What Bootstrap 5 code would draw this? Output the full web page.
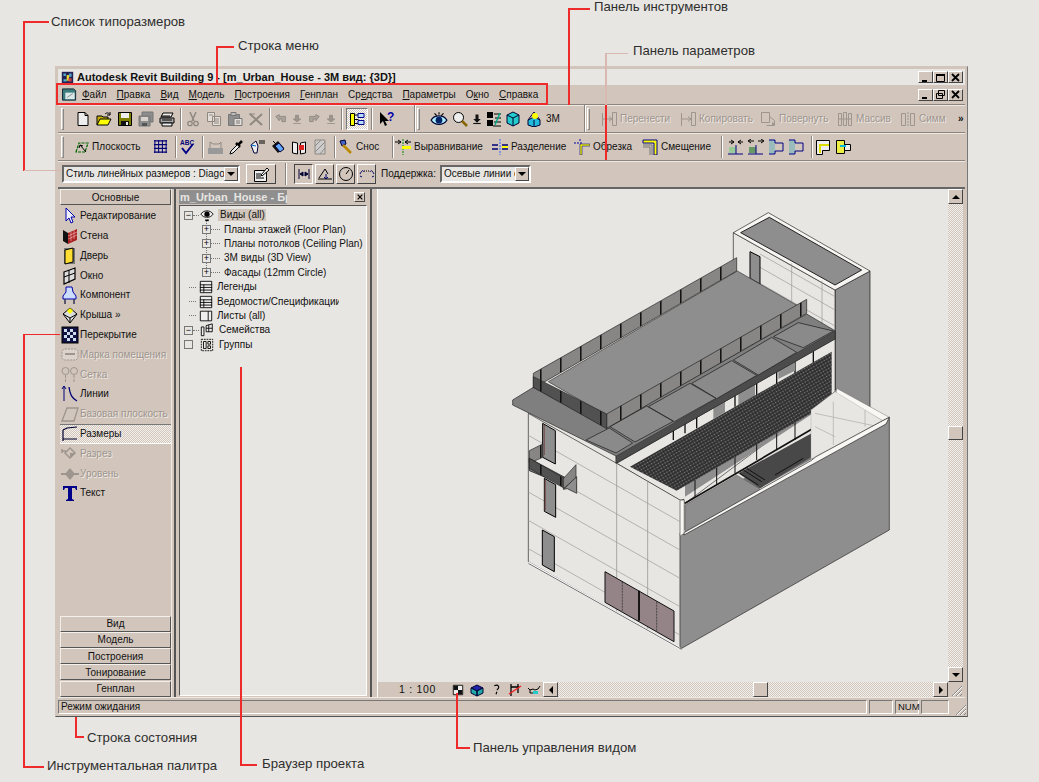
<!DOCTYPE html>
<html lang="ru">
<head>
<meta charset="utf-8">
<title>Autodesk Revit Building</title>
<link href="https://cdn.jsdelivr.net/npm/bootstrap@5.3.0/dist/css/bootstrap.min.css" rel="stylesheet">
<style>
:root{--rv-bg:#d2c6bc;--rv-page:#e8e6e2;--rv-dark:#777;--rv-red:#ee2a2a;}
html,body{height:782px;overflow:hidden;}
body{background:var(--rv-page);font-family:"Liberation Sans",Arial,sans-serif;font-size:10px;line-height:1;color:#111;position:relative;}
svg{display:block;flex:none;}
.rv-win{position:absolute;left:55px;top:66px;width:913px;height:651px;background:var(--rv-bg);border:1px solid;border-color:var(--rv-bg) #777 #555 var(--rv-bg);box-shadow:inset 1px 1px 0 var(--rv-bg);padding:2px;}
.rv-titlebar{height:16px;background:var(--rv-page);padding:0 2px 0 3px;}
.rv-title{font-weight:700;font-size:11px;margin-left:3px;white-space:nowrap;color:#111;}
.rv-capbtn{width:15px;height:12px;background:var(--rv-bg);border:1px solid;border-color:#fff #444 #444 #fff;display:flex;align-items:center;justify-content:center;}
.rv-menubar{height:19px;padding-right:2px;}
.rv-menubar .nav-link{padding:0;margin-right:10px;color:#111;font-size:10px;white-space:nowrap;}
.rv-row{border-top:1px solid #8c847c;box-shadow:inset 0 1px 0 #efe9e4;}
.rv-row1{height:28px;}
.rv-row2{height:28px;}
.rv-row3{height:27px;padding-left:4px;}
.rv-handle{width:3px;height:22px;border:1px solid;border-color:#fff #888 #888 #fff;margin:0 8px 0 3px;flex:none;}
.rv-handle2{margin-left:2px;}
.rv-handle3{margin-right:10px;}
.rv-cell{width:21px;height:22px;display:flex;align-items:center;justify-content:center;flex:none;}
.rv-sep{width:2px;height:22px;border-left:1px solid #8c847c;border-right:1px solid #fff;flex:none;}
.rv-lab{display:flex;align-items:center;height:22px;flex:none;overflow:hidden;white-space:nowrap;}
.rv-lab svg{margin-left:1px;margin-right:3px;}
.rv-off{color:#9d958e;text-shadow:1px 1px 0 #efe9e4;}
.rv-pressed{background:repeating-conic-gradient(#fff 0 25%,var(--rv-bg) 0 50%) 0 0/2px 2px;border:1px solid;border-color:#777 #fff #fff #777;}
.rv-combo{height:18px;background:var(--rv-page);border:2px solid;border-color:#666 #fff #fff #666;display:flex;align-items:center;padding-left:2px;overflow:hidden;white-space:nowrap;}
.rv-combotext{flex:1;overflow:hidden;font-size:10px;}
.rv-c1{width:178px}.rv-c2{width:91px}.rv-supp{margin-left:3px;margin-right:4px;white-space:nowrap;font-size:10px}
.rv-arrow{width:14px;height:14px;background:var(--rv-bg);border:1px solid;border-color:#fff #444 #444 #fff;display:flex;align-items:center;justify-content:center;flex:none;}
.rv-tog{width:19px;height:20px;background:var(--rv-bg);border:1px solid;border-color:#fff #444 #444 #fff;display:flex;align-items:center;justify-content:center;margin-right:2px;flex:none;}
.rv-tog.rv-pressed{border-color:#444 #fff #fff #444;}
.rv-big{width:30px;height:20px;margin-left:6px;margin-right:0;}
.w14{width:14px}.w12{width:12px}.w16{width:16px}.w19{width:19px}.w20{width:20px}.w22{width:22px}.w24{width:24px}
.w357{width:357px}.w170{width:170px}.l51{width:51px}.l56{width:56px}.l63{width:63px}.l68{width:68px}.l77{width:77px}.l78{width:78px}.l79{width:79px}.l80{width:80px}.l82{width:82px}.l97{width:97px}
.ml7{margin-left:7px}.ml9{margin-left:9px}.ml5{margin-left:5px}.ml4{margin-left:4px}.ml3{margin-left:3px}
.rv-divr{border-right:1px solid #8c847c;box-shadow:1px 0 0 #fff;height:27px;}
.rv-main{height:510px;border-top:2px solid #666;}
.rv-palette{width:111px;margin-left:2px;flex:none;}
.btn.rv-tab{display:block;width:111px;height:16px;padding:0;margin:0 0 .3px;font-size:10px;line-height:13px;color:#111;background:var(--rv-bg);border:1px solid;border-color:#f3efea #555 #555 #f3efea;border-radius:0;}
.rv-pal-list{padding-top:1px;}
.rv-pal-item{height:19.8px;display:flex;align-items:center;padding-left:1px;white-space:nowrap;}
.rv-pal-item svg{margin-right:1px;}
.rv-active{background:repeating-conic-gradient(#f4f0ec 0 25%,var(--rv-bg) 0 50%) 0 0/2px 2px;border-top:1px solid #777;border-bottom:1px solid #fff;}
.rv-split{width:5px;border-left:1px solid #efe9e4;border-right:2px solid #555;flex:none;}
.rv-browser{width:194px;flex:none;padding:1px 3px 1px 3px;}
.rv-bhead{height:14px;margin-bottom:1px;}
.rv-btitle{width:108px;background:#8f8f8f;color:#e8e6e2;font-weight:700;font-size:11px;height:14px;line-height:14px;overflow:hidden;white-space:nowrap;padding-left:1px;}
.rv-bclose{width:11px;height:10px;background:var(--rv-bg);border:1px solid;border-color:#fff #444 #444 #fff;margin-right:2px;font-size:8px;display:flex;align-items:center;justify-content:center;}
.rv-tree{flex:1;background:var(--rv-page);border:1px solid;border-color:#555 #fff #fff #555;padding:2px 0 0 4px;}
.rv-node{height:14.4px;display:flex;align-items:center;white-space:nowrap;position:relative;}
.rv-box{width:9px;height:9px;border:1px solid #777;background:var(--rv-page);display:flex;align-items:center;justify-content:center;font-size:9px;line-height:9px;color:#000;flex:none;position:relative;z-index:1;}
.rv-dots{border-top:1px dotted #777;width:6px;flex:none;}
.rv-ind{padding-left:18px;}
.rv-ind::before{content:"";position:absolute;left:22px;top:-5px;height:15px;border-left:1px dotted #777;}
.rv-ind .rv-dots{width:9px;}
.rv-nl{padding-left:5px;}
.rv-nl .rv-dots{width:7px;margin-right:3px;}
.rv-tname{margin-left:4px;}
.rv-sel{background:var(--rv-bg);padding:1px 1px;margin-left:3px;padding-left:2px;}
.rv-clip{width:122px;overflow:hidden;display:block;}
.rv-splitr{width:8px;flex:none;border-left:2px solid #555;border-right:1px solid #fff;}
.rv-draw{width:585px;flex:none;}
.rv-body{min-height:0}
.rv-canvas{flex:1;background:var(--rv-page);position:relative;overflow:hidden;}
.rv-check{background:repeating-conic-gradient(#f2f0ec 0 25%,#d2c6bc 0 50%) 0 0/2px 2px;}
.rv-vbar{width:15px;flex:none;}
.rv-sbtn{width:15px;height:15px;background:var(--rv-bg);border:1px solid;border-color:#fff #444 #444 #fff;display:flex;align-items:center;justify-content:center;flex:none;}
.rv-thumbv{height:14px;margin-top:222px;}
.rv-hbar{height:15px;background:var(--rv-bg);}
.rv-viewctl{width:180px;flex:none;padding-left:21px;}
.rv-scale{width:49px;font-size:10.5px;letter-spacing:.7px;}
.rv-vi{width:19px;display:flex;justify-content:center;flex:none;}
.rv-htrack{flex:1;}
.rv-thumbh{margin-left:195px;}
.rv-grip{width:15px;height:15px;flex:none;}
.rv-status{height:17px;padding:2px 0 0 0;border-top:1px solid #efe9e4;}
.rv-pane{height:14px;border:1px solid;border-color:#777 #fff #fff #777;display:flex;align-items:center;padding-left:2px;margin-right:2px;flex:none;font-size:10px;}
.rv-p1{width:809px}.rv-p2{width:24px}.rv-p3{width:24px;padding-left:2px;font-size:9.5px}.rv-p4{width:28px}
.rv-c{position:absolute;font-size:13.2px;line-height:16px;color:#2e2e2e;white-space:nowrap;margin:0;}
.rv-l{position:absolute;background:var(--rv-red);}
.rv-lp{position:absolute;background:#d8b8b0;}
.rv-redbox{position:absolute;left:56px;top:83px;width:492px;height:22px;border:2px solid var(--rv-red);pointer-events:none;}
.rv-house{position:absolute;left:122px;top:21px;}
.l1{left:24px;top:21px;width:25px;height:2px}.l2{left:23px;top:21px;width:2px;height:150px}.l3{left:24px;top:170px;width:37px;height:1px}
.l4{left:216px;top:46px;width:18px;height:2px}.l5{left:216px;top:46px;width:2px;height:38px}
.l6{left:568px;top:8px;width:22px;height:2px}.l7{left:568px;top:8px;width:2px;height:97px}
.l8{left:606px;top:53px;width:22px;height:1px}.l9{left:605px;top:53px;width:2px;height:52px}.l10{left:605px;top:105px;width:2px;height:55px}
.l11{left:23px;top:334px;width:2px;height:433px}.l12{left:23px;top:334px;width:37px;height:1px}.l13{left:23px;top:766px;width:21px;height:2px}
.l14{left:75px;top:717px;width:2px;height:21px}.l15{left:75px;top:736px;width:9px;height:2px}
.l16{left:240px;top:367px;width:2px;height:398px}.l17{left:240px;top:764px;width:17px;height:2px}
.l18{left:456px;top:693px;width:2px;height:56px}.l19{left:456px;top:747px;width:14px;height:2px}
.rv-t1{left:51px;top:14px}.rv-t2{left:238px;top:38px}.rv-t3{left:594px;top:-1px}.rv-t4{left:633px;top:43px}
.rv-t5{left:87px;top:730px}.rv-t6{left:47px;top:758px}.rv-t7{left:262px;top:756px}.rv-t8{left:473px;top:740px}
</style>
</head>
<body>
<svg width="0" height="0" class="position-absolute">
<defs>
<symbol id="i-new" viewBox="0 0 16 16"><path d="M3 1.500h7l3 3v10H3z" fill="#eee" stroke="#000"/><path d="M10 1.500v3h3" fill="none" stroke="#000"/></symbol>
<symbol id="i-open" viewBox="0 0 16 16"><path d="M1 14V5h5l1 1h5v2" fill="#c8b000" stroke="#000"/><path d="M1 14l3-6h11l-3 6z" fill="#ff0" stroke="#000"/><path d="M9 3c2-2 4-1 5 1M14 1v3h-3" fill="none" stroke="#000"/></symbol>
<symbol id="i-save" viewBox="0 0 16 16"><path d="M1.500 1.500h13v13h-13z" fill="#808000" stroke="#000"/><path d="M4 2h8v5H4z" fill="#eee"/><path d="M4 10h8v4H4z" fill="#111"/><path d="M9 11h2v3H9z" fill="#eee"/></symbol>
<symbol id="i-saveall" viewBox="0 0 16 16"><path d="M4 1h11v10H4z" fill="#8d8d8d" stroke="#777"/><path d="M1 5h11v10H1z" fill="#8d8d8d" stroke="#777"/><path d="M3 6h7v4H3z" fill="#d8d2cc"/><path d="M4 12h5v3H4z" fill="#555"/></symbol>
<symbol id="i-print" viewBox="0 0 16 16"><path d="M4 2h10l-2 4H2z" fill="#eee" stroke="#000"/><path d="M1 7h14v5H1z" fill="#aaa" stroke="#000"/><path d="M3 12h10v3H3z" fill="#eee" stroke="#000"/><path d="M3 9h10M3 5h8" stroke="#000"/></symbol>
<symbol id="i-cut" viewBox="0 0 16 16"><path d="M5 1l4 9M11 1L7 10" stroke="#8f8880" stroke-width="1.500" fill="none"/><circle cx="5" cy="12.500" r="2.200" fill="none" stroke="#8f8880" stroke-width="1.300"/><circle cx="11" cy="12.500" r="2.200" fill="none" stroke="#8f8880" stroke-width="1.300"/></symbol>
<symbol id="i-copy" viewBox="0 0 16 16"><path d="M1.500 1.500h7v9h-7zM6.500 5.500h8v9h-8z" fill="#e4ded8" stroke="#8f8880"/><path d="M8 8h5M8 10h5M8 12h5M3 4h4" stroke="#8f8880"/></symbol>
<symbol id="i-paste" viewBox="0 0 16 16"><path d="M1.500 3.500h11v11h-11z" fill="#8f8f8f" stroke="#777"/><path d="M4 1.500h5v3H4z" fill="#bbb" stroke="#777"/><path d="M7 7.500h8v7H7z" fill="#e4ded8" stroke="#777"/><path d="M9 10h4M9 12h4" stroke="#777"/></symbol>
<symbol id="i-del" viewBox="0 0 16 16"><path d="M2 3l12 11M14 3L2 14" stroke="#8f8880" stroke-width="2"/><path d="M1 3h6" stroke="#8f8880"/></symbol>
<symbol id="i-undo" viewBox="0 0 16 16"><path d="M2 5l4-2v2h7v6H9V8H6v2z" fill="#aaa49c" stroke="#8f8880"/></symbol>
<symbol id="i-redo" viewBox="0 0 16 16"><path d="M14 5l-4-2v2H3v6h4V8h3v2z" fill="#aaa49c" stroke="#8f8880"/></symbol>
<symbol id="i-down" viewBox="0 0 16 16"><path d="M6 3h4v5h3l-5 4-5-4h3zM3 14h10" fill="#9d958e" stroke="#8f8880"/></symbol>
<symbol id="i-dep" viewBox="0 0 16 16"><path d="M1.500 2.500h4v12h-4zM5.500 4h4M5.500 8.500h4M5.500 12.500h4" fill="#ff0" stroke="#000"/><path d="M9 2.500h6v4H9zM9 9.500h6v4H9z" fill="#bdf" stroke="#008"/></symbol>
<symbol id="i-help" viewBox="0 0 16 16"><path d="M2 1v12l3-3 2 5 2-1-2-4h4z" fill="#000"/><text x="9" y="10" font-size="12" font-weight="700" fill="#00a" font-family="Liberation Sans">?</text></symbol>
<symbol id="i-eye" viewBox="0 0 16 16"><path d="M1 9c3-5 11-5 14 0-3 5-11 5-14 0z" fill="#aef" stroke="#003"/><circle cx="8" cy="9" r="3" fill="#026"/><path d="M4 3l2 2M8 2v2M12 3l-2 2" stroke="#000"/></symbol>
<symbol id="i-zoom" viewBox="0 0 16 16"><circle cx="6.500" cy="6.500" r="5" fill="#eee" stroke="#000"/><path d="M10 10l5 5" stroke="#860" stroke-width="2.500"/></symbol>
<symbol id="i-dn" viewBox="0 0 16 16"><path d="M6 2h4v6h3l-5 5-5-5h3z" fill="#111"/><path d="M3 14h10" stroke="#111" stroke-width="1.500"/></symbol>
<symbol id="i-bars" viewBox="0 0 16 16"><path d="M1 1h6v6H1zM1 9h6v6H1z" fill="#000"/><path d="M8 3h7M9 7h6M8 11h7M7 15h8" stroke="#000"/><path d="M9 14l5-12" stroke="#0a8" stroke-width="1.500"/></symbol>
<symbol id="i-cube" viewBox="0 0 16 16"><path d="M8 1l6 3v8l-6 3-6-3V4z" fill="#2cc" stroke="#003"/><path d="M2 4l6 3 6-3M8 7v8" stroke="#003" fill="none"/></symbol>
<symbol id="i-house" viewBox="0 0 16 16"><path d="M8 6l6 3v5l-6 2-6-2V9z" fill="#2bd" stroke="#003"/><path d="M2 9l6-8 6 8M8 9v7" stroke="#003" fill="none"/><circle cx="9" cy="5" r="3" fill="#ff0"/></symbol>
<symbol id="i-move" viewBox="0 0 16 16"><path d="M1.500 2v13M11.500 1.500h4v13h-4zM1.500 8h9M8 5.500l3 2.500-3 2.500" fill="none" stroke="#9d958e"/></symbol>
<symbol id="i-rot" viewBox="0 0 16 16"><path d="M1.500 1.500h8v10h-8zM9.500 5.500l5 4v5h-8" fill="none" stroke="#9d958e"/><path d="M12 11l3 2-3 2" fill="#9d958e"/></symbol>
<symbol id="i-arr" viewBox="0 0 16 16"><path d="M1.500 2.500h3v12h-3zM6.500 1.500h3v13h-3zM11.500 2.500h3v12h-3zM1 8h14" fill="none" stroke="#9d958e"/></symbol>
<symbol id="i-mir" viewBox="0 0 16 16"><path d="M1.500 2.500h4v12h-4zM10.500 2.500h4v12h-4z" fill="none" stroke="#9d958e"/><path d="M8 1v15" stroke="#9d958e" stroke-dasharray="2 1"/></symbol>
<symbol id="i-plane" viewBox="0 0 16 16"><path d="M3 13L6 4h9l-3 9z" fill="none" stroke="#060" stroke-width="1.200" stroke-dasharray="3 1"/><path d="M7 6l6 7M6 9l1-3 3 1" fill="none" stroke="#000"/></symbol>
<symbol id="i-grid" viewBox="0 0 16 16"><path d="M2 1v14M6 1v14M10 1v14M14 1v14M1 2h14M1 6h14M1 10h14M1 14h14" stroke="#007" stroke-width="1.100"/></symbol>
<symbol id="i-abc" viewBox="0 0 16 16"><text x="1" y="6" font-size="6.500" font-weight="700" fill="#007" font-family="Liberation Sans">ABC</text><path d="M3 9l4 5 7-9" fill="none" stroke="#008" stroke-width="2"/></symbol>
<symbol id="i-dis" viewBox="0 0 16 16"><path d="M1 9h15v6H1z" fill="#999"/><path d="M3 9V3l3 2h6l2-2v6" fill="none" stroke="#8f8880"/></symbol>
<symbol id="i-drop" viewBox="0 0 16 16"><path d="M9 7l5-5M8 4l4 4" stroke="#000" stroke-width="2.500"/><path d="M9 6L3 12l-1 3 3-1 6-6" fill="#eee" stroke="#000"/></symbol>
<symbol id="i-paint" viewBox="0 0 16 16"><path d="M5 14L2 6l5-4 2 5-1 7z" fill="#eee" stroke="#003"/><path d="M10 2h6M10 4h6" stroke="#000" stroke-width="1.200"/><path d="M2 6l5 1" stroke="#06c"/></symbol>
<symbol id="i-buck" viewBox="0 0 16 16"><path d="M2 7l6-5 6 7-6 5z" fill="#111"/><path d="M5 7l4-3 5 6-4 3z" fill="#6af" stroke="#003"/><path d="M3 2l4 4" stroke="#000"/></symbol>
<symbol id="i-book" viewBox="0 0 16 16"><path d="M1.500 3l5 1v11l-5-1zM14.500 3l-5 1v11l5-1z" fill="#eee" stroke="#000"/><rect x="8" y="6" width="5" height="5" fill="#d22"/></symbol>
<symbol id="i-hatch" viewBox="0 0 16 16"><path d="M3 1h10v14H3z" fill="#ccc" stroke="#8f8880"/><path d="M3 7l6-6M3 13L13 3M8 15l5-6" stroke="#8f8880"/></symbol>
<symbol id="i-ham" viewBox="0 0 16 16"><path d="M3 2l5-1 1 4-4 2z" fill="#46c" stroke="#003"/><path d="M6 6l8 8" stroke="#b80" stroke-width="2.500"/></symbol>
<symbol id="i-align" viewBox="0 0 16 16"><path d="M0 3h6M10 3h6M3 1l3 2-3 2M13 1l-3 2 3 2" fill="none" stroke="#000"/><path d="M8 0v16" stroke="#080" stroke-dasharray="2 1"/><path d="M7 7h9v3H7z" fill="#ff0"/></symbol>
<symbol id="i-split" viewBox="0 0 16 16"><path d="M0 6h6M10 6h6M0 10h6M10 10h6" stroke="#007" stroke-width="1.300"/><path d="M10 7h6v2h-6z" fill="#ff0"/><path d="M8 0v16" stroke="#36f" stroke-dasharray="2 1"/></symbol>
<symbol id="i-trim" viewBox="0 0 16 16"><path d="M0 4h9" stroke="#00a" stroke-dasharray="2 1"/><path d="M6 0v3" stroke="#00a" stroke-dasharray="2 1"/><path d="M6 5h10v2H8v9H6z" fill="#ff0" stroke="#008" stroke-width=".6"/></symbol>
<symbol id="i-off" viewBox="0 0 16 16"><path d="M1 1h14v15h-3V4H1z" fill="#ff0" stroke="#008"/><path d="M1 6h9v10M1 8h7v8" fill="none" stroke="#777"/></symbol>
<symbol id="i-j1" viewBox="0 0 16 16"><path d="M1 3h5M10 3h5M3 1l3 2-3 2M13 1l-3 2 3 2" fill="none" stroke="#000"/><path d="M1 8h7v6H1z" fill="#9c9"/><path d="M0 15h15" stroke="#008"/><path d="M8 6v9" stroke="#008"/></symbol>
<symbol id="i-j2" viewBox="0 0 16 16"><path d="M6 2H1M10 2h5M3 0L0 2l3 2M13 0l3 2-3 2" fill="none" stroke="#000"/><path d="M1 8h7v6H1z" fill="#696"/><path d="M0 15h15M8 6v9" stroke="#008"/></symbol>
<symbol id="i-j3" viewBox="0 0 16 16"><path d="M1 1h6v14H1z" fill="#9bb"/><path d="M1 1h6v3h8v8H7v3H1" fill="none" stroke="#008"/></symbol>
<symbol id="i-corner" viewBox="0 0 16 16"><path d="M1.500 1.500h13v10h-7v4h-6z" fill="#eee" stroke="#000"/><path d="M5 14V6h9" fill="none" stroke="#dd0" stroke-width="2"/></symbol>
<symbol id="i-wjoin" viewBox="0 0 16 16"><path d="M1.500 1.500h8v13h-8z" fill="#ee4" stroke="#000"/><path d="M9.500 5.500h6v6h-6z" fill="#eee" stroke="#000"/><path d="M5 7h6" stroke="#0bd" stroke-width="2"/></symbol>
<symbol id="i-cpen" viewBox="0 0 16 16"><path d="M1.500 4.500h12v11h-12z" fill="#eee" stroke="#000"/><path d="M3 8h5M3 10h5M3 12h8" stroke="#000"/><path d="M8 9l6-7 2 2-7 6z" fill="#fff" stroke="#000"/></symbol>
<symbol id="i-tg1" viewBox="0 0 16 16"><path d="M3 3v10M13 3v10M4 8l3-2v4zM12 8l-3-2v4z" stroke="#003" fill="#003"/></symbol>
<symbol id="i-tg2" viewBox="0 0 16 16"><path d="M2 12L8 3l3 5M1 13h14" fill="none" stroke="#000"/><path d="M9 8v5M7 11l2 2 2-2" fill="none" stroke="#006"/></symbol>
<symbol id="i-tg3" viewBox="0 0 16 16"><circle cx="8" cy="8" r="6.500" fill="none" stroke="#000"/><path d="M8 8l3-4" stroke="#000"/></symbol>
<symbol id="i-tg4" viewBox="0 0 16 16"><path d="M1 8c2-4 3-4 4-2M11 6c1-2 2-2 4 2M1 10l2 1M15 10l-2 1" fill="none" stroke="#006"/><path d="M5 5h6" stroke="#000" stroke-dasharray="1 1"/></symbol>
<symbol id="i-logo" viewBox="0 0 16 16"><path d="M0 2h12l2 2v10H0z" fill="#3c7c7c" stroke="#123"/><path d="M3 6h10v7H3z" fill="#d8e8e8"/><path d="M5 11l6-4" stroke="#888"/></symbol>
<symbol id="i-app" viewBox="0 0 16 16"><path d="M1 1h14v14H1z" fill="#225"/><path d="M3 3h3v3H3zM10 3h3v4h-3zM3 10h4v3H3z" fill="#5ac"/><path d="M7 5h3v7H7z" fill="#ed3"/><path d="M9 9h4v4H9z" fill="#c44"/></symbol>
<symbol id="p-sel" viewBox="0 0 18 18"><path d="M5 1v13l3-3 2 5 2-1-2-5h4z" fill="#eef" stroke="#00a"/></symbol>
<symbol id="p-wall" viewBox="0 0 18 18"><path d="M2 3l5 3v11l-5-3z" fill="#111"/><path d="M7 6l9-4v11l-9 4z" fill="#a22"/><path d="M7 9l9-4M7 12l9-4M10 5v9M13 3v9" stroke="#eaa" stroke-width=".7"/></symbol>
<symbol id="p-door" viewBox="0 0 18 18"><path d="M3 1h11v16H3z" fill="#777"/><path d="M4 3l8-2v14l-8 2z" fill="#fd3" stroke="#000"/></symbol>
<symbol id="p-win" viewBox="0 0 18 18"><path d="M3 5l11-4v11L3 17z" fill="#ddd" stroke="#000" stroke-width="1.200"/><path d="M8 3v13M3 10l11-4" stroke="#000"/></symbol>
<symbol id="p-comp" viewBox="0 0 18 18"><path d="M5 1h6l1 5 3 4v3H2v-3l3-4z" fill="#cdf" stroke="#00a"/><path d="M4 13v5M13 13v5" stroke="#335" stroke-width="1.500"/></symbol>
<symbol id="p-roof" viewBox="0 0 18 18"><path d="M2 8l7-6 7 6-7 9z" fill="#ddd" stroke="#000"/><path d="M2 8l7 4 7-4M9 12v5" fill="none" stroke="#000"/><path d="M6 5l3-3 3 3-3 3z" fill="#ff0"/></symbol>
<symbol id="p-floor" viewBox="0 0 18 18"><rect x="1" y="1" width="16" height="16" fill="#114" stroke="#000"/><path d="M3 3h3v3H3zM9 3h3v3H9zM6 6h3v3H6zM12 6h3v3h-3zM3 9h3v3H3zM9 9h3v3H9zM6 12h3v3H6zM12 12h3v3h-3z" fill="#cde"/></symbol>
<symbol id="p-room" viewBox="0 0 18 18"><rect x="1" y="3" width="16" height="11" rx="3" fill="#dcd4cc" stroke="#9d958e" stroke-dasharray="2 1"/><path d="M4 8h10" stroke="#9d958e" stroke-width="2"/></symbol>
<symbol id="p-gridl" viewBox="0 0 18 18"><circle cx="4.500" cy="5" r="3.500" fill="none" stroke="#9d958e"/><circle cx="13" cy="5" r="3.500" fill="none" stroke="#9d958e"/><path d="M4.500 9v8M13 9v8" stroke="#9d958e" stroke-dasharray="3 1"/></symbol>
<symbol id="p-lines" viewBox="0 0 18 18"><path d="M3 1v15M3 1L1 4M3 1l2 3" fill="none" stroke="#007"/><path d="M8 2c1 8 3 11 8 14" fill="none" stroke="#007" stroke-width="1.300"/></symbol>
<symbol id="p-ref" viewBox="0 0 18 18"><path d="M1 16L6 3h11l-4 13z" fill="none" stroke="#9d958e" stroke-width="1.300"/></symbol>
<symbol id="p-dim" viewBox="0 0 18 18"><path d="M2 5l4-2 10-1M2 5v11M2 14h14" fill="none" stroke="#003" stroke-width="1.200"/></symbol>
<symbol id="p-sec" viewBox="0 0 18 18"><path d="M1 6h4M1 4v4M9 3l5 5-5 5-5-5z" fill="none" stroke="#9d958e" stroke-width="1.500"/><path d="M9 8l5 0-5 5z" fill="#9d958e"/></symbol>
<symbol id="p-lev" viewBox="0 0 18 18"><path d="M0 9h18" stroke="#9d958e" stroke-width="2"/><path d="M9 3l5 6-5 6-5-6z" fill="#9d958e"/></symbol>
<symbol id="p-text" viewBox="0 0 18 18"><path d="M2 2h14v4h-1l-1-2h-3v11l2 1v1H5v-1l2-1V4H4L3 6H2z" fill="#008"/></symbol>
<symbol id="t-eye" viewBox="0 0 16 16"><path d="M1 7c3-5 11-5 14 0-3 5-11 5-14 0z" fill="#eee" stroke="#000"/><circle cx="8" cy="7" r="3" fill="#000"/><path d="M6 14h4" stroke="#000" stroke-width="2"/></symbol>
<symbol id="t-leg" viewBox="0 0 16 16"><path d="M1.500 1.500h13v13h-13z" fill="#eee" stroke="#000"/><path d="M1 5.500h14M1 8.500h14M1 11.500h14M5.500 5v9" stroke="#000"/></symbol>
<symbol id="t-sheet" viewBox="0 0 16 16"><path d="M1.500 2.500h13v11h-13zM10.500 2.500v11" fill="#eee" stroke="#000"/></symbol>
<symbol id="t-fam" viewBox="0 0 16 16"><path d="M1.500 4.500h3v10h-3z" fill="#eee" stroke="#000"/><path d="M7 3l7-2v9H7zM7 6h7M10 2v8" fill="#eee" stroke="#000"/></symbol>
<symbol id="t-grp" viewBox="0 0 16 16"><path d="M1.500 1.500h13v13h-13z" fill="none" stroke="#000" stroke-dasharray="2 1"/><path d="M4 4h3v8H4zM9 4h3v3H9zM9 9h3v3H9z" fill="#eee" stroke="#000"/></symbol>
<symbol id="v-chk" viewBox="0 0 14 14"><path d="M1.500 1.500h11v11h-11z" fill="#eee" stroke="#000"/><path d="M2 2h5v5H2zM7 7h5v5H7z" fill="#111"/></symbol>
<symbol id="v-cube" viewBox="0 0 14 14"><path d="M7 2l6 3-6 3-6-3z" fill="#22a" stroke="#003"/><path d="M1 5l6 3v5L1 10zM13 5L7 8v5l6-3z" fill="#2aa" stroke="#003"/></symbol>
<symbol id="v-hid" viewBox="0 0 14 14"><path d="M5 2c5-2 7 2 3 5M7 12l1-3" fill="none" stroke="#000" stroke-width="1.300"/></symbol>
<symbol id="v-crop" viewBox="0 0 14 14"><path d="M3 1v12M3 4h8M10 1v9" stroke="#000" stroke-width="1.300"/><path d="M1 11L13 3" stroke="#e22" stroke-width="1.500"/></symbol>
<symbol id="v-glass" viewBox="0 0 14 14"><path d="M1 5l2 2 3-1 2 1 3-1 2-3M3 10h4M3 7v3" fill="none" stroke="#000"/><path d="M6 8h5v3H6z" fill="#2cc"/></symbol>
<symbol id="tri-d" viewBox="0 0 8 8"><path d="M0 2h8L4 6z" fill="#000"/></symbol>
<symbol id="tri-u" viewBox="0 0 8 8"><path d="M0 6h8L4 2z" fill="#000"/></symbol>
<symbol id="tri-l" viewBox="0 0 8 8"><path d="M6 0v8L2 4z" fill="#000"/></symbol>
<symbol id="tri-r" viewBox="0 0 8 8"><path d="M2 0v8l4-4z" fill="#000"/></symbol>
<symbol id="b-min" viewBox="0 0 9 9"><path d="M1 7h5v2H1z" fill="#000"/></symbol>
<symbol id="b-max" viewBox="0 0 9 9"><path d="M.5 1.500h8v7h-8z" fill="none" stroke="#000"/><path d="M0 1h9v2H0z" fill="#000"/></symbol>
<symbol id="b-x" viewBox="0 0 9 9"><path d="M1 1l7 7M8 1L1 8" stroke="#000" stroke-width="1.800"/></symbol>
<symbol id="b-res" viewBox="0 0 9 9"><path d="M2.500 .5h6v5h-6zM.5 3.500h6v5h-6z" fill="#d2c6bc" stroke="#000"/></symbol>
<symbol id="grip" viewBox="0 0 12 12"><path d="M1 11L11 1M5 11l6-6M9 11l2-2" stroke="#888"/><path d="M2 11L11 2M6 11l5-5" stroke="#fff"/></symbol>
</defs>
</svg>

<div class="rv-win d-flex flex-column">
  <div class="rv-titlebar d-flex align-items-center">
    <svg width="13" height="13"><use href="#i-app"/></svg>
    <span class="rv-title flex-grow-1">Autodesk Revit Building 9 - [m_Urban_House - 3M вид: {3D}]</span>
    <span class="rv-capbtn"><svg width="9" height="9"><use href="#b-min"/></svg></span>
    <span class="rv-capbtn"><svg width="9" height="9"><use href="#b-max"/></svg></span>
    <span class="rv-capbtn"><svg width="9" height="9"><use href="#b-x"/></svg></span>
  </div>
  <div class="rv-menubar d-flex align-items-center">
    <svg width="16" height="15" class="ms-1 me-1"><use href="#i-logo"/></svg>
    <nav class="nav flex-grow-1 flex-nowrap">
      <a class="nav-link" href="#"><u>Ф</u>айл</a><a class="nav-link" href="#"><u>П</u>равка</a><a class="nav-link" href="#"><u>В</u>ид</a><a class="nav-link" href="#"><u>М</u>одель</a><a class="nav-link" href="#"><u>П</u>остроения</a><a class="nav-link" href="#"><u>Г</u>енплан</a><a class="nav-link" href="#">Ср<u>е</u>дства</a><a class="nav-link" href="#"><u>П</u>араметры</a><a class="nav-link" href="#">О<u>к</u>но</a><a class="nav-link" href="#"><u>С</u>правка</a>
    </nav>
    <span class="rv-capbtn"><svg width="9" height="9"><use href="#b-min"/></svg></span>
    <span class="rv-capbtn"><svg width="9" height="9"><use href="#b-res"/></svg></span>
    <span class="rv-capbtn"><svg width="9" height="9"><use href="#b-x"/></svg></span>
  </div>

  <div class="rv-row rv-row1 d-flex align-items-center">
    <div class="d-flex align-items-center w357 rv-divr">
      <span class="rv-handle"></span>
      <span class="rv-cell"><svg width="16" height="16"><use href="#i-new"/></svg></span>
      <span class="rv-cell"><svg width="16" height="16"><use href="#i-open"/></svg></span>
      <span class="rv-cell"><svg width="16" height="16"><use href="#i-save"/></svg></span>
      <span class="rv-cell"><svg width="16" height="16"><use href="#i-saveall"/></svg></span>
      <span class="rv-cell"><svg width="16" height="16"><use href="#i-print"/></svg></span>
      <span class="rv-sep ml3"></span>
      <span class="rv-cell ms-0"><svg width="16" height="16"><use href="#i-cut"/></svg></span>
      <span class="rv-cell"><svg width="16" height="16"><use href="#i-copy"/></svg></span>
      <span class="rv-cell"><svg width="16" height="16"><use href="#i-paste"/></svg></span>
      <span class="rv-cell"><svg width="16" height="16"><use href="#i-del"/></svg></span>
      <span class="rv-sep ml3"></span>
      <span class="rv-cell w20"><svg width="14" height="14"><use href="#i-undo"/></svg></span>
      <span class="rv-cell w12"><svg width="12" height="14"><use href="#i-down"/></svg></span>
      <span class="rv-cell w22"><svg width="14" height="14"><use href="#i-redo"/></svg></span>
      <span class="rv-cell w12"><svg width="12" height="14"><use href="#i-down"/></svg></span>
      <span class="rv-sep ml4"></span>
      <span class="rv-cell rv-pressed w22 ml3"><svg width="16" height="16"><use href="#i-dep"/></svg></span>
      <span class="rv-sep ml3"></span>
      <span class="rv-cell w16 ml5"><svg width="16" height="16"><use href="#i-help"/></svg></span>
    </div>
    <div class="d-flex align-items-center rv-divr w170">
      <span class="rv-handle rv-handle2"></span>
      <span class="rv-cell"><svg width="18" height="18"><use href="#i-eye"/></svg></span>
      <span class="rv-cell"><svg width="16" height="16"><use href="#i-zoom"/></svg></span>
      <span class="rv-cell w14"><svg width="12" height="14"><use href="#i-dn"/></svg></span>
      <span class="rv-cell w19"><svg width="16" height="16"><use href="#i-bars"/></svg></span>
      <span class="rv-cell w19"><svg width="16" height="16"><use href="#i-cube"/></svg></span>
      <span class="rv-cell w24"><svg width="16" height="16"><use href="#i-house"/></svg></span>
      <span>3М</span>
    </div>
    <span class="rv-handle rv-handle2 rv-handle3"></span>
    <span class="rv-lab rv-off l79"><svg width="16" height="16"><use href="#i-move"/></svg>Перенести</span>
    <span class="rv-lab rv-off l80"><svg width="16" height="16"><use href="#i-move"/></svg>Копировать</span>
    <span class="rv-lab rv-off l77"><svg width="16" height="16"><use href="#i-rot"/></svg>Повернуть</span>
    <span class="rv-lab rv-off l63"><svg width="16" height="16"><use href="#i-arr"/></svg>Массив</span>
    <span class="rv-lab rv-off l51"><svg width="16" height="16"><use href="#i-mir"/></svg>Симм</span>
    <span class="fw-bold ms-2">»</span>
  </div>

  <div class="rv-row rv-row2 d-flex align-items-center">
    <span class="rv-handle"></span>
    <span class="rv-lab l78"><svg width="16" height="16"><use href="#i-plane"/></svg>Плоскость</span>
    <span class="rv-cell"><svg width="15" height="15"><use href="#i-grid"/></svg></span>
    <span class="rv-sep ml4"></span>
    <span class="rv-cell w20"><svg width="16" height="16"><use href="#i-abc"/></svg></span>
    <span class="rv-sep ml5"></span>
    <span class="rv-cell"><svg width="16" height="16"><use href="#i-dis"/></svg></span>
    <span class="rv-cell"><svg width="16" height="16"><use href="#i-drop"/></svg></span>
    <span class="rv-cell"><svg width="16" height="16"><use href="#i-paint"/></svg></span>
    <span class="rv-cell"><svg width="16" height="16"><use href="#i-buck"/></svg></span>
    <span class="rv-cell"><svg width="16" height="16"><use href="#i-book"/></svg></span>
    <span class="rv-cell"><svg width="16" height="16"><use href="#i-hatch"/></svg></span>
    <span class="rv-sep ml4"></span>
    <span class="rv-lab l56"><svg width="16" height="16"><use href="#i-ham"/></svg>Снос</span>
    <span class="rv-sep"></span>
    <span class="rv-lab l97"><svg width="16" height="16"><use href="#i-align"/></svg>Выравнивание</span>
    <span class="rv-lab l82"><svg width="16" height="16"><use href="#i-split"/></svg>Разделение</span>
    <span class="rv-lab l68"><svg width="16" height="16"><use href="#i-trim"/></svg>Обрезка</span>
    <span class="rv-lab l80"><svg width="16" height="16"><use href="#i-off"/></svg>Смещение</span>
    <span class="rv-sep"></span>
    <span class="rv-cell w20 ml3"><svg width="16" height="16"><use href="#i-j1"/></svg></span>
    <span class="rv-cell w20"><svg width="16" height="16"><use href="#i-j2"/></svg></span>
    <span class="rv-cell w20"><svg width="16" height="16"><use href="#i-j3"/></svg></span>
    <span class="rv-cell w20"><svg width="16" height="16"><use href="#i-j3"/></svg></span>
    <span class="rv-sep ml5"></span>
    <span class="rv-cell w20"><svg width="16" height="16"><use href="#i-corner"/></svg></span>
    <span class="rv-cell w20"><svg width="16" height="16"><use href="#i-wjoin"/></svg></span>
  </div>

  <div class="rv-row rv-row3 d-flex align-items-center">
    <div class="rv-combo rv-c1"><span class="rv-combotext">Стиль линейных размеров : Diagonal</span><span class="rv-arrow"><svg width="8" height="8"><use href="#tri-d"/></svg></span></div>
    <span class="rv-tog rv-big"><svg width="16" height="16"><use href="#i-cpen"/></svg></span>
    <span class="rv-sep ml9"></span>
    <span class="rv-tog rv-pressed ml7"><svg width="16" height="16"><use href="#i-tg1"/></svg></span>
    <span class="rv-tog"><svg width="16" height="16"><use href="#i-tg2"/></svg></span>
    <span class="rv-tog"><svg width="16" height="16"><use href="#i-tg3"/></svg></span>
    <span class="rv-tog"><svg width="16" height="16"><use href="#i-tg4"/></svg></span>
    <span class="rv-supp">Поддержка:</span>
    <div class="rv-combo rv-c2"><span class="rv-combotext">Осевые линии стен</span><span class="rv-arrow"><svg width="8" height="8"><use href="#tri-d"/></svg></span></div>
  </div>

  <div class="rv-main d-flex">
    <div class="rv-palette d-flex flex-column">
      <button type="button" class="btn rv-tab">Основные</button>
      <div class="rv-pal-list flex-grow-1">
        <div class="rv-pal-item"><svg width="18" height="18"><use href="#p-sel"/></svg>Редактирование</div>
        <div class="rv-pal-item"><svg width="18" height="18"><use href="#p-wall"/></svg>Стена</div>
        <div class="rv-pal-item"><svg width="18" height="18"><use href="#p-door"/></svg>Дверь</div>
        <div class="rv-pal-item"><svg width="18" height="18"><use href="#p-win"/></svg>Окно</div>
        <div class="rv-pal-item"><svg width="18" height="18"><use href="#p-comp"/></svg>Компонент</div>
        <div class="rv-pal-item"><svg width="18" height="18"><use href="#p-roof"/></svg>Крыша »</div>
        <div class="rv-pal-item"><svg width="18" height="18"><use href="#p-floor"/></svg>Перекрытие</div>
        <div class="rv-pal-item rv-off"><svg width="18" height="18"><use href="#p-room"/></svg>Марка помещения</div>
        <div class="rv-pal-item rv-off"><svg width="18" height="18"><use href="#p-gridl"/></svg>Сетка</div>
        <div class="rv-pal-item"><svg width="18" height="18"><use href="#p-lines"/></svg>Линии</div>
        <div class="rv-pal-item rv-off"><svg width="18" height="18"><use href="#p-ref"/></svg>Базовая плоскость</div>
        <div class="rv-pal-item rv-active"><svg width="18" height="18"><use href="#p-dim"/></svg>Размеры</div>
        <div class="rv-pal-item rv-off"><svg width="18" height="18"><use href="#p-sec"/></svg>Разрез</div>
        <div class="rv-pal-item rv-off"><svg width="18" height="18"><use href="#p-lev"/></svg>Уровень</div>
        <div class="rv-pal-item"><svg width="18" height="18"><use href="#p-text"/></svg>Текст</div>
      </div>
      <button type="button" class="btn rv-tab">Вид</button>
      <button type="button" class="btn rv-tab">Модель</button>
      <button type="button" class="btn rv-tab">Построения</button>
      <button type="button" class="btn rv-tab">Тонирование</button>
      <button type="button" class="btn rv-tab">Генплан</button>
    </div>
    <div class="rv-split"></div>
    <div class="rv-browser d-flex flex-column">
      <div class="rv-bhead d-flex align-items-center justify-content-between">
        <span class="rv-btitle">m_Urban_House - Браузер</span>
        <span class="rv-bclose"><svg width="6" height="6"><use href="#b-x"/></svg></span>
      </div>
      <div class="rv-tree">
        <div class="rv-node"><span class="rv-box">−</span><span class="rv-dots"></span><svg width="16" height="14"><use href="#t-eye"/></svg><span class="rv-tname rv-sel">Виды (all)</span></div>
        <div class="rv-node rv-ind"><span class="rv-box">+</span><span class="rv-dots"></span><span class="rv-tname">Планы этажей (Floor Plan)</span></div>
        <div class="rv-node rv-ind"><span class="rv-box">+</span><span class="rv-dots"></span><span class="rv-tname">Планы потолков (Ceiling Plan)</span></div>
        <div class="rv-node rv-ind"><span class="rv-box">+</span><span class="rv-dots"></span><span class="rv-tname">3М виды (3D View)</span></div>
        <div class="rv-node rv-ind"><span class="rv-box">+</span><span class="rv-dots"></span><span class="rv-tname">Фасады (12mm Circle)</span></div>
        <div class="rv-node rv-nl"><span class="rv-dots"></span><svg width="14" height="14"><use href="#t-leg"/></svg><span class="rv-tname">Легенды</span></div>
        <div class="rv-node rv-nl"><span class="rv-dots"></span><svg width="14" height="14"><use href="#t-leg"/></svg><span class="rv-tname rv-clip">Ведомости/Спецификации</span></div>
        <div class="rv-node rv-nl"><span class="rv-dots"></span><svg width="14" height="14"><use href="#t-sheet"/></svg><span class="rv-tname">Листы (all)</span></div>
        <div class="rv-node"><span class="rv-box">−</span><span class="rv-dots"></span><svg width="16" height="14"><use href="#t-fam"/></svg><span class="rv-tname">Семейства</span></div>
        <div class="rv-node"><span class="rv-box"></span><span class="rv-dots invisible"></span><svg width="16" height="14"><use href="#t-grp"/></svg><span class="rv-tname">Группы</span></div>
      </div>
    </div>
    <div class="rv-splitr"></div>
    <div class="rv-draw d-flex flex-column">
      <div class="d-flex flex-grow-1 rv-body">
        <div class="rv-canvas">
          <svg class="rv-house" width="400" height="460" viewBox="0 0 1200 1380">
            <defs>
              <pattern id="railU" patternUnits="userSpaceOnUse" width="60" height="12" patternTransform="matrix(1 -.57 0 1 0 0)"><rect width="60" height="12" fill="#f4f3f0"/><path d="M0 3h60M0 9h60" stroke="#1a1a1a" stroke-width="2.800"/><path d="M2 0v12" stroke="#111" stroke-width="5"/></pattern>
              <pattern id="railD" patternUnits="userSpaceOnUse" width="60" height="12" patternTransform="matrix(1 .57 0 1 0 0)"><rect width="60" height="12" fill="#888"/><path d="M0 3h60M0 9h60" stroke="#1a1a1a" stroke-width="2.800"/><path d="M2 0v12" stroke="#111" stroke-width="5"/></pattern>
              <pattern id="screen" patternUnits="userSpaceOnUse" width="9" height="9" patternTransform="rotate(-30)"><rect width="9" height="9" fill="#2c2c2c"/><circle cx="4.500" cy="4.500" r="2.600" fill="#7c7c7c"/></pattern>
              <pattern id="gar" patternUnits="userSpaceOnUse" width="6" height="6" patternTransform="matrix(1 .57 0 1 0 0)"><rect width="6" height="6" fill="#7f7073"/><path d="M0 3h6" stroke="#b2a0a3" stroke-width="2"/></pattern>
            </defs>
            <path d="M1005 240l105-57v410l-105-55z" fill="#8e8e8e" stroke="#111" stroke-width="2"/>
            <path d="M700 68l305 172v310L700 370z" fill="#e8e6e2" stroke="#222" stroke-width="2"/>
            <path d="M700 68L805 8l305 175-105 57z" fill="#f6f5f2" stroke="#222" stroke-width="2"/>
            <path d="M722 68l86-46 277 158-80 45z" fill="#8e8e8e" stroke="#222" stroke-width="3"/>
            <path d="M875 160v160M966 212v150M780 132l225 128M780 172l225 128M780 220l225 128" stroke="#999" stroke-width="2" fill="none"/>
            <path d="M750 125l30 15v82l-30-17z" fill="#8e8e8e" stroke="#000" stroke-width="3"/>
            <path d="M350 760L1005 385v160l-450 335z" fill="#e8e6e2" stroke="#333" stroke-width="2"/>
            <path d="M520 650v40M555 630v40M590 610v45M645 580v40M705 550v40M770 510v45M830 475v50M885 450v50M940 420v50" stroke="#111" stroke-width="4"/>
            <path d="M640 585l35-18v40l-35 20zM715 545l50-28v40l-50 28zM835 480l50-28v30l-50 25z" fill="#8e8e8e"/>
            <path d="M555 860V720l385-220v110z" fill="#8e8e8e"/>
            <path d="M585 860V720M650 825V680M705 790V650M770 750V610M830 720V590M885 690V560M940 660V530" stroke="#111" stroke-width="3"/>
            <path d="M555 880l385-225" stroke="#111" stroke-width="5"/>
            <path d="M390 770L995 425v150L530 842z" fill="url(#screen)"/>
            <path d="M555 885l155-85 60 40 170-95v-60l-385 222z" fill="#7a7a7a"/>
            <path d="M555 965V885l155-90 75 45z" fill="#8e8e8e" stroke="#333"/>
            <path d="M715 790l220-120v70L780 835z" fill="#484848"/>
            <path d="M720 790l55 35M730 780l55 35M740 775l55 35M825 795l85-50" stroke="#111" stroke-width="3"/>
            <path d="M1010 535l158 87-20 10-140-78z" fill="#f8f7f4" stroke="#333"/>
            <path d="M1005 545l143 87-215 115V600z" fill="#e8e6e2" stroke="#999"/>
            <path d="M1000 575v130M1095 600v50M945 610l190 40M945 650l60 30" stroke="#aaa" stroke-width="2"/>
            <path d="M552 973l616-351v338L545 1315l-5-5V968z" fill="#8e8e8e" stroke="#222" stroke-width="2"/>
            <path d="M552 968L933 752l15-12 200-108 20-10-10 20L552 975z" fill="#f8f7f4" stroke="#222" stroke-width="2"/>
            <path d="M85 610l265 150 190 110 12 -2v92l-12 9v346l-455-260z" fill="#e8e6e2" stroke="#222" stroke-width="2"/>
            <path d="M552 870v100l-12 8V872z" fill="#f8f7f4" stroke="#333"/>
            <path d="M350 760v445M443 815v448M540 870v440" stroke="#999" stroke-width="2.500" fill="none"/>
            <path d="M85 676l455 259M85 761l455 259M85 846l455 259M85 931l455 259M85 1016l455 259" stroke="#999" stroke-width="2" fill="none"/>
            <path d="M85 1058l455 257" stroke="#fff" stroke-width="6"/>
            <path d="M85 1060l460 258" stroke="#222" stroke-width="2"/>
            <path d="M38 570l62-38 220 120 600-340 85 50v25L348 760v-22L38 585z" fill="#7f7f7f" stroke="#222" stroke-width="2"/>
            <path d="M348 738l657-375v24L348 760z" fill="#4c4c4c" stroke="#111"/>
            <path d="M258 690l70-36 70 45-50 30zM330 650l110-62 80 46-115 62zM445 590l125-70 78 45-125 70zM575 520l120-68 75 44-120 70zM700 450l115-68 75 45-115 68zM820 380l75-42 105 25-90 50z" fill="#8a8a8a" stroke="#2c2c2c" stroke-width="2.500"/>
            <path d="M145 515L712 183l205 118-598 315z" fill="#8e8e8e" stroke="#333" stroke-width="2"/>
            <path d="M100 490L710 143v40L140 512l-40 22z" fill="url(#railU)" stroke="#222" stroke-width="2"/>
            <path d="M320 612L920 268v42L320 655z" fill="url(#railU)" stroke="#222" stroke-width="2"/>
            <path d="M100 500L320 612v44L100 532z" fill="url(#railD)" stroke="#222" stroke-width="2"/>
            <path d="M128 640l38 22v100l-38-20z" fill="#8e8e8e" stroke="#000" stroke-width="3"/>
            <path d="M133 645v90" stroke="#7d5a5a" stroke-width="4"/>
            <path d="M133 805l34 19v98l-34-18z" fill="#8e8e8e" stroke="#000" stroke-width="3"/>
            <path d="M136 810v90" stroke="#7d5a5a" stroke-width="4"/>
            <path d="M88 722l40-20v40L88 760z" fill="url(#railU)" stroke="#222" stroke-width="2"/>
            <path d="M88 745l140 75v20L88 782z" fill="#777" stroke="#111" stroke-width="2"/>
            <path d="M88 745l105 60v30L88 775z" fill="url(#railD)" stroke="#222" stroke-width="2"/>
            <path d="M190 806l38-42v42l-38 30z" fill="url(#railU)" stroke="#222" stroke-width="2"/>
            <path d="M190 838l40-38v50l-28-14z" fill="#8e8e8e" stroke="#111" stroke-width="2"/>
            <path d="M127 960l36 20v105l-36-20z" fill="#8e8e8e" stroke="#000" stroke-width="3"/>
            <path d="M315 1085l207 118v92l-207-118z" fill="url(#gar)" stroke="#111" stroke-width="3"/>
            <path d="M367 1115v90M470 1175v88" stroke="#222" stroke-width="2" stroke-dasharray="6 3"/>
            <path d="M417 1142v90" stroke="#000" stroke-width="5"/>
          </svg>
        </div>
        <div class="rv-vbar rv-check d-flex flex-column">
          <span class="rv-sbtn"><svg width="8" height="8"><use href="#tri-u"/></svg></span>
          <span class="rv-sbtn rv-thumbv"></span>
          <span class="flex-grow-1"></span>
          <span class="rv-sbtn"><svg width="8" height="8"><use href="#tri-d"/></svg></span>
        </div>
      </div>
      <div class="rv-hbar d-flex align-items-center">
        <div class="rv-viewctl d-flex align-items-center">
          <span class="rv-scale">1 : 100</span>
          <span class="rv-vi"><svg width="12" height="12"><use href="#v-chk"/></svg></span>
          <span class="rv-vi"><svg width="14" height="14"><use href="#v-cube"/></svg></span>
          <span class="rv-vi"><svg width="12" height="12"><use href="#v-hid"/></svg></span>
          <span class="rv-vi"><svg width="14" height="14"><use href="#v-crop"/></svg></span>
          <span class="rv-vi"><svg width="14" height="14"><use href="#v-glass"/></svg></span>
          <span class="rv-sbtn"><svg width="8" height="8"><use href="#tri-l"/></svg></span>
        </div>
        <div class="rv-htrack rv-check d-flex h-100">
          <span class="rv-sbtn rv-thumbh"></span>
          <span class="flex-grow-1"></span>
          <span class="rv-sbtn"><svg width="8" height="8"><use href="#tri-r"/></svg></span>
        </div>
        <span class="rv-grip d-flex align-items-end justify-content-end"><svg width="12" height="12"><use href="#grip"/></svg></span>
      </div>
    </div>
  </div>

  <div class="rv-status d-flex">
    <span class="rv-pane rv-p1">Режим ожидания</span>
    <span class="rv-pane rv-p2"></span>
    <span class="rv-pane rv-p3">NUM</span>
    <span class="rv-pane rv-p4"></span>
    <svg width="12" height="12" class="mt-1 ms-1"><use href="#grip"/></svg>
  </div>
</div>

<span class="rv-redbox"></span>
<i class="rv-l l1"></i><i class="rv-l l2"></i><i class="rv-lp l3"></i>
<i class="rv-l l4"></i><i class="rv-l l5"></i>
<i class="rv-l l6"></i><i class="rv-l l7"></i>
<i class="rv-lp l8"></i><i class="rv-lp l9"></i><i class="rv-l l10"></i>
<i class="rv-l l11"></i><i class="rv-l l12"></i><i class="rv-l l13"></i>
<i class="rv-l l14"></i><i class="rv-l l15"></i>
<i class="rv-l l16"></i><i class="rv-l l17"></i>
<i class="rv-l l18"></i><i class="rv-l l19"></i>
<p class="rv-c rv-t1">Список типоразмеров</p>
<p class="rv-c rv-t2">Строка меню</p>
<p class="rv-c rv-t3">Панель инструментов</p>
<p class="rv-c rv-t4">Панель параметров</p>
<p class="rv-c rv-t5">Строка состояния</p>
<p class="rv-c rv-t6">Инструментальная палитра</p>
<p class="rv-c rv-t7">Браузер проекта</p>
<p class="rv-c rv-t8">Панель управления видом</p>
</body>
</html>
